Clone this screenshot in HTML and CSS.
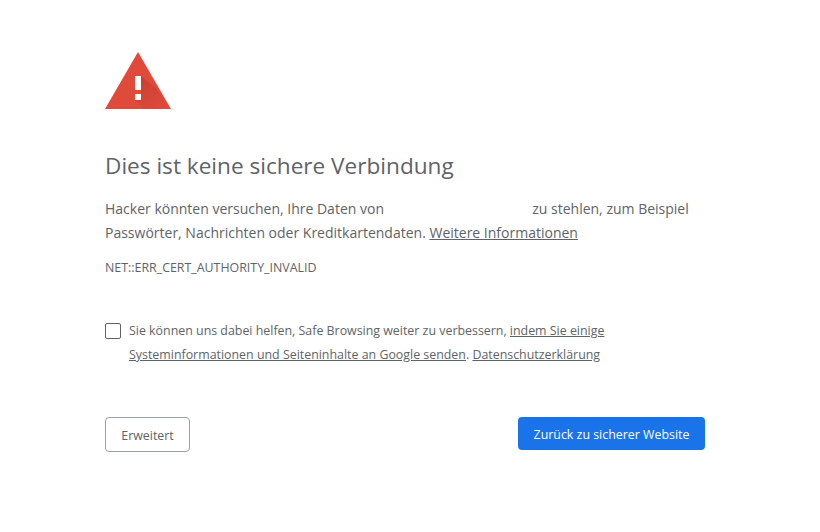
FILE: index.html
```html
<!DOCTYPE html>
<html lang="de">
<head>
  <meta charset="UTF-8">
  <title>Datenschutzfehler</title>
  <link rel="stylesheet" href="styles.css">
</head>
<body>
  <div class="interstitial">
    <svg class="warn-icon" viewBox="0 0 66 58" width="66" height="58">
      <defs>
        <linearGradient id="fold" x1="0.2" y1="0" x2="0.8" y2="1">
          <stop offset="0" stop-color="#b3362a" stop-opacity="0.55"/>
          <stop offset="1" stop-color="#b3362a" stop-opacity="0"/>
        </linearGradient>
      </defs>
      <polygon points="33,0 66,57 0,57" fill="#e04a3b"/>
      <polygon points="36,24 53,38 64,57 39,57 30,48 36,48" fill="url(#fold)"/>
      <rect x="30" y="24" width="6" height="14" fill="#fff"/>
      <rect x="30" y="42" width="6" height="6" fill="#fff"/>
    </svg>

    <h1 class="title">Dies ist keine sichere Verbindung</h1>

    <p class="message">Hacker könnten versuchen, Ihre Daten von <span class="hidden-host"></span> zu stehlen, zum Beispiel Passwörter, Nachrichten oder Kreditkartendaten. <a href="#">Weitere Informationen</a></p>

    <div class="error-code">NET::ERR_CERT_AUTHORITY_INVALID</div>

    <div class="opt-in">
      <span class="checkbox"></span>
      <p>Sie können uns dabei helfen, Safe Browsing weiter zu verbessern, <a href="#">indem Sie einige Systeminformationen und Seiteninhalte an Google senden</a>. <a href="#">Datenschutzerklärung</a></p>
    </div>

    <div class="actions">
      <button class="btn btn-secondary">Erweitert</button>
      <button class="btn btn-primary">Zurück zu sicherer Website</button>
    </div>
  </div>
</body>
</html>
```

FILE: styles.css
```css
body {
  margin: 0;
  background: #fff;
  color: #5f6368;
  font-family: "Open Sans", "Noto Sans", sans-serif;
}
a {
  color: #5f6368;
  text-decoration: underline;
}
.interstitial {
  width: 600px;
  margin-left: 105px;
  padding-top: 52px;
}
.warn-icon {
  display: block;
}
.title {
  margin: 41px 0 0;
  font-size: 22.6px;
  line-height: 30px;
  font-weight: 400;
}
.message {
  margin: 16px 0 0;
  font-size: 14px;
  line-height: 24px;
  width: 600px;
}
.hidden-host {
  display: inline-block;
  width: 141px;
}
.error-code {
  margin-top: 13px;
  font-size: 12.4px;
  line-height: 20px;
}
.opt-in {
  display: flex;
  gap: 8px;
  margin-top: 43px;
}
.checkbox {
  flex: none;
  box-sizing: border-box;
  width: 16px;
  height: 16px;
  margin-top: 2px;
  border: 1px solid #5f6368;
  border-radius: 2px;
}
.opt-in p {
  margin: -2px 0 0;
  font-size: 12.4px;
  line-height: 24px;
  width: 500px;
}
.actions {
  display: flex;
  justify-content: space-between;
  align-items: flex-start;
  margin-top: 50px;
}
.btn {
  font-family: inherit;
  font-size: 12.4px;
  border-radius: 4px;
  padding: 1px 0 0;
}
.btn-secondary {
  width: 85px;
  height: 35px;
  background: #fff;
  color: #5f6368;
  border: 1px solid #9aa0a6;
}
.btn-primary {
  width: 187px;
  height: 33px;
  background: #1a73e8;
  color: #fff;
  border: 0;
  font-weight: 500;
}
```
